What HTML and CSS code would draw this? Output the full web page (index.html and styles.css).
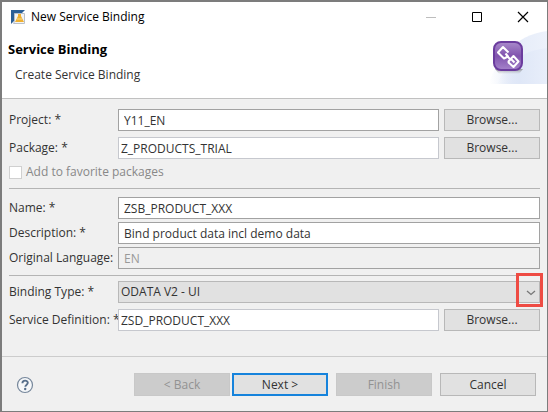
FILE: index.html
```html
<!DOCTYPE html>
<html lang="en">
<head>
<meta charset="utf-8">
<title>New Service Binding</title>
<link rel="stylesheet" href="styles.css">
</head>
<body>
<form class="dialog" onsubmit="return false">
  <header class="titlebar">
    <svg class="app-icon" width="14" height="14" viewBox="0 0 14 14" aria-hidden="true">
      <path d="M0 0h14L0 14z" fill="#2b5f96"/>
      <path d="M3.500 3.500h10v10h-11l1-2z" fill="#f3f4f6" stroke="#b9c0ca"/>
      <path d="M7 4h3v2l3 6H4l3-6z" fill="#efb030"/>
      <path d="M6 9h5" stroke="#f9dc8c"/>
    </svg>
    <span class="window-title">New Service Binding</span>
    <button class="window-button" type="button" aria-label="Minimize" disabled>
      <svg width="12" height="12" viewBox="0 0 12 12"><path d="M1 6.500h10" stroke="#bdbdbd"/></svg>
    </button>
    <button class="window-button" type="button" aria-label="Maximize">
      <svg width="12" height="12" viewBox="0 0 12 12"><path d="M1.500 1.500h9v9h-9z" fill="none" stroke="#000"/></svg>
    </button>
    <button class="window-button" type="button" aria-label="Close">
      <svg width="12" height="12" viewBox="0 0 12 12"><path d="M1 1l10 10M11 1L1 11" stroke="#000" stroke-width="1.200"/></svg>
    </button>
  </header>

  <section class="banner">
    <div class="banner-text">
      <h1>Service Binding</h1>
      <p>Create Service Binding</p>
    </div>
    <svg class="banner-art" width="58" height="54" viewBox="0 0 58 54" aria-hidden="true">
      <defs>
        <linearGradient id="fade" x1="0" x2="1" y1="0" y2="0">
          <stop offset="0" stop-color="#dfe7f7" stop-opacity="0"/>
          <stop offset=".45" stop-color="#dfe7f7"/>
          <stop offset="1" stop-color="#e8eefa"/>
        </linearGradient>
        <linearGradient id="tile" x1="0" x2="0" y1="0" y2="1">
          <stop offset="0" stop-color="#a98acb"/>
          <stop offset=".5" stop-color="#8154ae"/>
          <stop offset="1" stop-color="#a583cb"/>
        </linearGradient>
        <linearGradient id="shade" x1="0" x2="0" y1="0" y2="1">
          <stop offset="0" stop-color="#777" stop-opacity=".7"/>
          <stop offset="1" stop-color="#999" stop-opacity="0"/>
        </linearGradient>
      </defs>
      <path d="M0 53C8 25 28 4 58 0v53z" fill="url(#fade)" opacity=".8"/>
      <path d="M8 53C18 30 34 20 58 17v36z" fill="url(#fade)"/>
      <path d="M6 38h28l-4 5H10z" fill="url(#shade)"/>
      <rect x="5" y="11" width="28" height="28" rx="7" fill="url(#tile)" stroke="#6b3c9e" stroke-width="2"/>
      <path d="M19.500 21.500L14 16l-5 5.500 6 6 4-2-2.500-3M19 31l5.500-6 5 5.500-5 5.500L19 31M18.500 25.500l2.500 2.500M22 28l3.500 3.500" fill="none" stroke="#fff" stroke-width="2" stroke-linejoin="round"/>
    </svg>
  </section>

  <main class="fields">
    <section class="group wide-gap">
      <div class="row">
        <label for="project">Project: *</label>
        <input class="inset" id="project" type="text" value="Y11_EN">
        <button class="browse" type="button">Browse...</button>
      </div>
      <div class="row">
        <label for="package">Package: *</label>
        <input class="plain" id="package" type="text" value="Z_PRODUCTS_TRIAL">
        <button class="browse" type="button">Browse...</button>
      </div>
      <div class="favorite">
        <input id="favorite" type="checkbox" disabled>
        <label for="favorite">Add to favorite packages</label>
      </div>
    </section>
    <section class="group details">
      <div class="row">
        <label for="name">Name: *</label>
        <input class="inset" id="name" type="text" value="ZSB_PRODUCT_XXX">
      </div>
      <div class="row">
        <label for="description">Description: *</label>
        <input class="inset" id="description" type="text" value="Bind product data incl demo data">
      </div>
      <div class="row">
        <label for="language">Original Language:</label>
        <input class="inset" id="language" type="text" value="EN" disabled>
      </div>
    </section>
    <section class="group wide-gap binding">
      <div class="row">
        <label for="type">Binding Type: *</label>
        <div class="select-wrap">
          <select id="type"><option>ODATA V2 - UI</option></select>
          <svg class="chevron" width="10" height="6" viewBox="0 0 10 6" aria-hidden="true"><path d="M1 1l4 3.500L9 1" fill="none" stroke="#777" stroke-width="1.300"/></svg>
          <span class="highlight"></span>
        </div>
      </div>
      <div class="row">
        <label for="definition">Service Definition: *</label>
        <input class="plain" id="definition" type="text" value="ZSD_PRODUCT_XXX">
        <button class="browse" type="button">Browse...</button>
      </div>
    </section>
  </main>

  <footer class="actions">
    <button class="help" type="button" aria-label="Help">
      <svg width="18" height="18" viewBox="0 0 18 18"><circle cx="9" cy="9" r="7.500" fill="#f6f8fa" stroke="#76879b" stroke-width="1.200"/><path d="M6.400 7.200c0-3.400 5.400-3.200 5.400-.4 0 1.900-2.500 1.800-2.500 4" fill="none" stroke="#58708c" stroke-width="1.900"/><circle cx="9.200" cy="13" r="1.200" fill="#58708c"/></svg>
    </button>
    <div class="nav">
      <button type="button" disabled>&lt; Back</button>
      <button class="primary" type="submit">Next &gt;</button>
    </div>
    <button type="button" disabled>Finish</button>
    <button type="button">Cancel</button>
  </footer>
</form>
</body>
</html>
```
FILE: styles.css
```css
* {
  box-sizing: border-box;
}

body {
  margin: 0;
}

body,
button,
input,
select {
  font-family: "Open Sans", "Noto Sans", sans-serif;
  font-size: 12px;
  line-height: 16px;
  color: #333;
}

.dialog {
  display: flex;
  flex-direction: column;
  min-height: 100vh;
  border: solid #7c7c7c;
  border-width: 2px 1px 1px 2px;
  background: #f0f0f0;
}

.titlebar {
  display: flex;
  align-items: center;
  height: 29px;
  padding: 0 1px 0 9px;
  background: #fff;
}

.window-title {
  flex: 1;
  margin-left: 6px;
  color: #000;
}

.window-button {
  display: grid;
  place-items: center;
  width: 46px;
  height: 28px;
  padding: 0;
  border: 0;
  background: none;
}

.banner {
  display: flex;
  justify-content: space-between;
  height: 68px;
  border-bottom: 1px solid #c0c0c0;
  background: #fff;
}

.banner-text {
  padding: 9px 0 0 6px;
}

.banner h1 {
  margin: 0;
  font-size: 13px;
  line-height: 18px;
  color: #000;
}

.banner p {
  margin: 9px 0 0 7px;
}

.fields {
  padding: 0 7px;
}

.group {
  display: flex;
  flex-direction: column;
  gap: 3px;
  padding: 8px 0 7px;
  border-top: 1px solid #b4b4b4;
}

.wide-gap {
  gap: 6px;
}

.group:first-child {
  padding: 10px 0 9px;
  border-top: 0;
}

.details {
  padding-bottom: 6px;
}

.binding {
  padding: 5px 0 25px;
}

.row {
  display: grid;
  grid-template-columns: 109px 1fr auto;
  align-items: center;
}

.row label {
  white-space: nowrap;
}

.row input {
  width: 100%;
  min-width: 0;
  height: 22px;
  padding: 0 5px;
  border: 1px solid #a2a2a2;
  border-radius: 0;
  background: #fff;
}

.row .plain {
  padding: 0 2px;
  border-color: #c6c8ce;
}

.row input:disabled {
  background: #f0f0f0;
  color: #999;
}

.browse {
  margin-left: 5px;
}

.browse,
.actions button {
  width: 96px;
  height: 22px;
  padding: 0;
  border: 1px solid #b8b8b8;
  background: #e1e1e1;
}

.favorite {
  display: flex;
  align-items: center;
  gap: 4px;
  height: 14px;
  color: #888;
}

.favorite input {
  appearance: none;
  width: 13px;
  height: 13px;
  margin: 0;
  border: 1px solid #d0d0d0;
  background: #fff;
}

.select-wrap {
  position: relative;
  grid-column: 2 / -1;
}

select {
  display: block;
  appearance: none;
  width: 100%;
  height: 22px;
  padding: 0 2px;
  border: 1px solid #b8b8b8;
  border-radius: 0;
  background: #e1e1e1;
}

.chevron {
  position: absolute;
  top: 9px;
  right: 4px;
  pointer-events: none;
}

.highlight {
  position: absolute;
  top: -8px;
  right: -3px;
  width: 27px;
  height: 34px;
  border: 3px solid #ee4b43;
  pointer-events: none;
}

.actions {
  display: flex;
  flex: 1;
  align-items: flex-start;
  gap: 8px;
  padding: 16px 11px 14px 14px;
  border-top: 1px solid #ccc;
}

.actions button {
  height: 23px;
}

.actions button:disabled {
  border-color: #c8c8c8;
  background: #ccc;
  color: #929292;
}

.actions .primary {
  border: 2px solid #1683dc;
}

.actions .help {
  display: grid;
  place-items: center;
  width: 18px;
  margin-right: auto;
  border: 0;
  background: none;
}

.nav {
  display: flex;
  gap: 2px;
}
```
